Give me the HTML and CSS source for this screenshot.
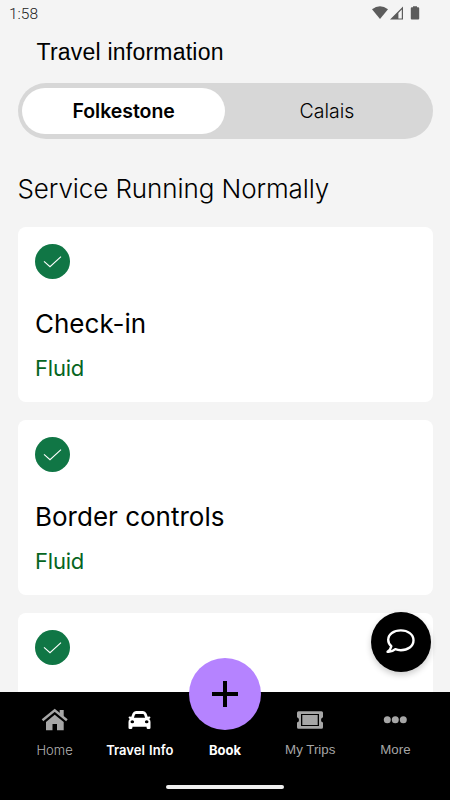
FILE: index.html
```html
<!DOCTYPE html>
<html lang="en">
<head>
<meta charset="utf-8">
<title>Travel information</title>
<link rel="stylesheet" href="styles.css">
</head>
<body>
<div class="app">
  <header class="status">
    <span class="time">1:58</span>
    <svg class="status-icons" width="50" height="16" viewBox="0 0 50 16" fill="#5c5c5c">
      <path d="M0 3.200Q8 -2.600 16 3.200L8 13Z"/>
      <path fill-rule="evenodd" d="M18 13.500L31 .5V13.500ZM26.400 7V12.500H29.800V3.600Z"/>
      <path d="M41 .2h4v1h1.200q1 0 1 1v10.300q0 1-1 1h-6.400q-1 0-1-1V2.200q0-1 1-1H41Z"/>
    </svg>
  </header>
  <main class="content">
    <h1 class="title">Travel information</h1>
    <div class="segments">
      <button class="segment selected"><span>Folkestone</span></button>
      <button class="segment"><span>Calais</span></button>
    </div>
    <h2 class="service">Service Running Normally</h2>
    <div class="cards">
      <section class="card">
        <svg class="check" viewBox="0 0 35 35"><circle cx="17.500" cy="17.500" r="17.500"/><path d="M9 17.300L15 22.700L26 12.600"/></svg>
        <h3 class="name">Check-in</h3>
        <p class="state">Fluid</p>
      </section>
      <section class="card">
        <svg class="check" viewBox="0 0 35 35"><circle cx="17.500" cy="17.500" r="17.500"/><path d="M9 17.300L15 22.700L26 12.600"/></svg>
        <h3 class="name">Border controls</h3>
        <p class="state">Fluid</p>
      </section>
      <section class="card">
        <svg class="check" viewBox="0 0 35 35"><circle cx="17.500" cy="17.500" r="17.500"/><path d="M9 17.300L15 22.700L26 12.600"/></svg>
      </section>
    </div>
  </main>
  <button class="chat" aria-label="Chat">
    <svg width="32" height="28" viewBox="0 0 32 28"><path d="M6.300 18.200Q3.200 15.400 3.200 11.800C3.200 6.300 8.800 2.400 15.800 2.400S28.500 6.300 28.500 12.300S22.800 22.200 15.800 22.200Q12.900 22.200 10.300 21.200Q7 24.200 2.600 23.800Q5.800 21.400 6.300 18.200Z"/></svg>
  </button>
  <nav class="tabs">
    <a class="tab">
      <svg class="icon" viewBox="0 0 28 24"><path d="M18.700 2h4v8l-4-3Z"/><path d="M13.700 6.700L22.700 14V22.200H16V16H11.500V22.200H5V14Z"/><path class="roof" d="M1.500 12.200L13.700 2.400L25.900 12.200"/></svg>
      <span class="home">Home</span>
    </a>
    <a class="tab active">
      <svg class="icon" viewBox="0 0 28 24"><path fill-rule="evenodd" d="M6.500 5.600Q7.600 3 10 3H17Q19.400 3 20.500 5.600L21.700 8.700L23.500 8.500Q24.800 8.900 24.300 10L23.200 11Q24.500 12.200 24.500 14V19.700Q24.500 21 23.200 21H22Q20.600 21 20.600 19.700V18.800H6.400V19.700Q6.400 21 5 21H3.800Q2.500 21 2.500 19.700V14Q2.500 12.200 3.800 11L2.700 10Q2.200 8.900 3.500 8.500L5.300 8.700ZM10 5.900Q9.300 5.900 9 6.600L7.900 9.700H19.100L18 6.600Q17.700 5.900 17 5.900ZM4.500 13.800A1.800 1.500 0 1 0 8.100 13.800A1.800 1.500 0 1 0 4.500 13.800ZM18.900 13.800A1.800 1.500 0 1 0 22.500 13.800A1.800 1.500 0 1 0 18.900 13.800Z"/></svg>
      <span class="travel">Travel Info</span>
    </a>
    <a class="tab active">
      <span class="book"><svg width="72" height="72" viewBox="0 0 72 72"><path d="M23 36H49M36 23V49"/></svg></span>
      <span class="icon"></span>
      <span class="book-label">Book</span>
    </a>
    <a class="tab">
      <svg class="icon" viewBox="0 0 28 24"><path fill-rule="evenodd" d="M2.500 3.200H25.500Q27 3.200 27 4.700V9.300Q25 9.800 25 12Q25 14.200 27 14.500V19.300Q27 20.800 25.500 20.800H2.500Q1 20.800 1 19.300V14.500Q3 14.200 3 12Q3 9.800 1 9.300V4.700Q1 3.200 2.500 3.200ZM5 6V18H23V6ZM6.300 7.100H21.700V16.900H6.300Z"/></svg>
      <span class="trips">My Trips</span>
    </a>
    <a class="tab">
      <svg class="icon" viewBox="0 0 28 24"><circle cx="6.300" cy="11.800" r="3.500"/><circle cx="14.300" cy="11.800" r="3.500"/><circle cx="22.300" cy="11.800" r="3.500"/></svg>
      <span class="more">More</span>
    </a>
    <div class="handle"></div>
  </nav>
</div>
</body>
</html>
```
FILE: styles.css
```css
* { box-sizing: border-box; margin: 0; padding: 0; }
body { font-family: Inter, sans-serif; color: #000; background: #f4f4f4; }
button { border: 0; background: none; font: inherit; color: inherit; }
.app { position: relative; display: flex; flex-direction: column; width: 450px; height: 800px; overflow: hidden; }
.status { flex: none; height: 32px; display: flex; justify-content: space-between; padding: 6px 28px 0 9px; }
.time { font: 300 15.5px/17px Roboto, sans-serif; color: #222; }
.status-icons { width: 50px; height: 16px; }
.content { flex: 1; min-height: 0; overflow: hidden; padding: 0 17px 0 17.5px; }
.title { font: 400 23px/40px "Liberation Sans", sans-serif; letter-spacing: .22px; margin-left: 19px; white-space: nowrap; }
.segments { display: flex; height: 56px; margin-top: 11px; padding: 5px 4.5px; border-radius: 28px; background: #d7d7d7; }
.segment { flex: 1; border-radius: 24px; font-size: 19.5px; font-weight: 300; line-height: 46px; }
.selected { background: #fff; font-weight: 600; letter-spacing: -.05px; }
.service { margin-top: 33px; font-size: 26px; line-height: 34px; font-weight: 300; letter-spacing: -.09px; white-space: nowrap; }
.cards { display: flex; flex-direction: column; gap: 17.5px; margin-top: 20.5px; }
.card { height: 175.5px; padding: 17.5px; border-radius: 8px; background: #fff; }
.check { display: block; width: 35px; height: 35px; fill: #107645; }
.check path { fill: none; stroke: #fff; stroke-width: 1.1; }
.name { margin-top: 27.5px; font-size: 26px; line-height: 34px; font-weight: 400; }
.state { margin-top: 12.5px; font-size: 22px; line-height: 30px; letter-spacing: -.2px; color: #056522; }
.chat { position: absolute; left: 371px; top: 611.5px; width: 60px; height: 60px; border-radius: 50%; background: #000; display: flex; align-items: center; justify-content: center; box-shadow: 0 3px 6px rgba(0, 0, 0, .2); }
.chat path { fill: none; stroke: #fff; stroke-width: 2.4; stroke-linejoin: round; }
.tabs { position: relative; flex: none; display: grid; grid-template-columns: repeat(5, 1fr); height: 108px; padding: 16px 12px 0; background: #000; }
.tab { display: flex; flex-direction: column; align-items: center; color: #a6a6a6; font-size: 13px; line-height: 18px; white-space: nowrap; }
.active { color: #fff; font-weight: 700; }
.travel { font-weight: 600; font-size: 13px; word-spacing: 1px; }
.home { font-weight: 300; color: #b4b4b4; }
.trips, .more { font-family: "Liberation Sans", sans-serif; font-size: 13.3px; }
.icon { width: 28px; height: 24px; margin-bottom: 9px; fill: currentColor; }
.roof { fill: none; stroke: currentColor; stroke-width: 2.5; }
.book { position: absolute; left: 189px; top: -34.5px; width: 72px; height: 72px; border-radius: 50%; background: #b583ff; }
.book svg { display: block; }
.book path { stroke: #000; stroke-width: 4; }
.handle { position: absolute; left: 166px; bottom: 11px; width: 118px; height: 4.500px; border-radius: 3px; background: #f0f0f0; }
```
